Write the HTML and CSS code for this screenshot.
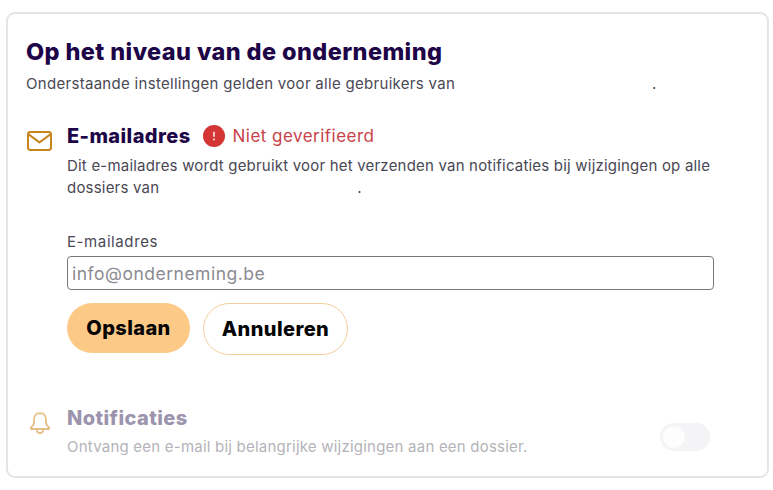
FILE: index.html
```html
<!DOCTYPE html>
<html lang="nl">
<head>
<meta charset="utf-8">
<title>Instellingen</title>
<link rel="stylesheet" href="styles.css">
</head>
<body>
<main class="card">
  <h1 class="title">Op het niveau van de onderneming</h1>
  <p class="lead">Onderstaande instellingen gelden voor alle gebruikers van<span class="gap-company"></span>.</p>

  <section class="row row-email">
    <svg class="icon icon-mail" viewBox="0 0 25 20" width="25" height="20" aria-hidden="true">
      <rect x="1" y="1" width="23" height="18" rx="2.400" fill="none" stroke="#c8851f" stroke-width="2"/>
      <path d="M1.600 3.400 12.500 11.400 23.400 3.400" fill="none" stroke="#c8851f" stroke-width="2" stroke-linejoin="round"/>
    </svg>
    <div class="body">
      <div class="head">
        <h2 class="subtitle">E-mailadres</h2>
        <svg class="alert" viewBox="0 0 22 22" width="22" height="22" aria-hidden="true">
          <circle cx="11" cy="11" r="11" fill="#d43636"/>
          <rect x="10.300" y="6.400" width="1.400" height="5.600" rx="0.700" fill="#fff"/>
          <circle cx="11" cy="14.500" r="0.900" fill="#fff"/>
        </svg>
        <span class="status">Niet geverifieerd</span>
      </div>
      <p class="desc">Dit e-mailadres wordt gebruikt voor het verzenden van notificaties bij wijzigingen op alle dossiers van<span class="gap-dossier"></span>.</p>
      <label class="label" for="email">E-mailadres</label>
      <input class="input" id="email" type="text" placeholder="info@onderneming.be">
      <div class="actions">
        <button class="btn btn-primary" type="button">Opslaan</button>
        <button class="btn btn-ghost" type="button">Annuleren</button>
      </div>
    </div>
  </section>

  <section class="row row-notif">
    <svg class="icon icon-bell" viewBox="0 0 22 22" width="22" height="22" aria-hidden="true">
      <path d="M11 1C7.200 1 5 3.800 5 7.200v3.300c0 1.900-1.200 3.200-3 5.200-.5.600-.2 1.300.6 1.300h16.800c.8 0 1.100-.7.600-1.300-1.800-2-3-3.300-3-5.200V7.200C17 3.800 14.800 1 11 1Z" fill="none" stroke="#e6bd85" stroke-width="1.800" stroke-linejoin="round"/>
      <path d="M7.800 17.200c0 2.400 1.400 3.800 3.200 3.800s3.200-1.400 3.200-3.800" fill="none" stroke="#e6bd85" stroke-width="1.800"/>
    </svg>
    <div class="body">
      <h2 class="subtitle subtitle-muted">Notificaties</h2>
      <p class="desc desc-muted">Ontvang een e-mail bij belangrijke wijzigingen aan een dossier.</p>
    </div>
    <span class="toggle"><span class="knob"></span></span>
  </section>
</main>
</body>
</html>
```

FILE: styles.css
```css
* { box-sizing: border-box; }
html, body { margin: 0; background: #fff; }
body {
  padding: 12px 4px 0 6px;
  font-family: "Inter", "Liberation Sans", sans-serif;
  color: #4a4854;
}
.card {
  height: 466px;
  border: 2px solid #e5e5e7;
  border-radius: 9px;
  padding: 23px 18px 0 18px;
  overflow: hidden;
}
.title {
  margin: 0;
  font-size: 23.500px;
  line-height: 30px;
  font-weight: 800;
  color: #1d0547;
  letter-spacing: 0.4px;
}
.lead {
  margin: 6px 0 0;
  font-size: 15px;
  line-height: 22px;
  letter-spacing: 0.3px;
}
.gap-company { display: inline-block; width: 197px; }
.row { display: flex; }
.row-email { margin-top: 27px; }
.icon { flex: none; }
.icon-mail { margin: 9px 0 0 1px; }
.body { flex: 1; min-width: 0; margin-left: 15px; }
.head { display: flex; align-items: center; height: 28px; }
.subtitle {
  margin: 0;
  font-size: 20px;
  line-height: 28px;
  font-weight: 800;
  color: #1d0547;
  letter-spacing: 0.4px;
}
.subtitle-muted { color: #9c93ad; }
.alert { margin-left: 12px; }
.status {
  margin-left: 8px;
  font-size: 17px;
  color: #c8424a;
  letter-spacing: 0.47px;
}
.desc {
  margin: 5px 0 0;
  width: 650px;
  font-size: 15px;
  line-height: 22px;
  letter-spacing: 0.2px;
}
.gap-dossier { display: inline-block; width: 198px; }
.label {
  display: block;
  margin-top: 32px;
  font-size: 15px;
  line-height: 22px;
  letter-spacing: 0.6px;
}
.input {
  display: block;
  width: 647px;
  height: 34px;
  margin-top: 3px;
  padding: 0 4px;
  border: 1px solid #77777d;
  border-radius: 4px;
  font: 400 17.500px "Inter", sans-serif;
  letter-spacing: 0.5px;
  color: #4a4854;
  outline: none;
}
.input::placeholder { color: #8c8b93; opacity: 1; }
.actions { display: flex; align-items: flex-start; gap: 13px; margin-top: 13px; }
.btn {
  border-radius: 26px;
  font: 800 20px "Inter", sans-serif;
  letter-spacing: 0.4px;
  color: #050505;
  cursor: pointer;
  padding: 0;
}
.btn-primary { width: 123px; height: 50px; background: #fdc987; border: 0; }
.btn-ghost { width: 145px; height: 52px; background: #fff; border: 1px solid #f4cf9c; }
.row-notif { margin-top: 49px; }
.icon-bell { margin: 8px 0 0 3px; }
.row-notif .body { margin-left: 16px; }
.desc-muted { width: auto; color: #b4b3b9; margin-top: 4px; letter-spacing: 0.22px; }
.toggle {
  position: relative;
  flex: none;
  width: 50px;
  height: 28px;
  border-radius: 14px;
  background: #f4f4f6;
  margin: 19px 39px 0 0;
}
.knob {
  position: absolute;
  left: 3px;
  top: 3px;
  width: 22px;
  height: 22px;
  border-radius: 50%;
  background: #fdfdfe;
}
```
